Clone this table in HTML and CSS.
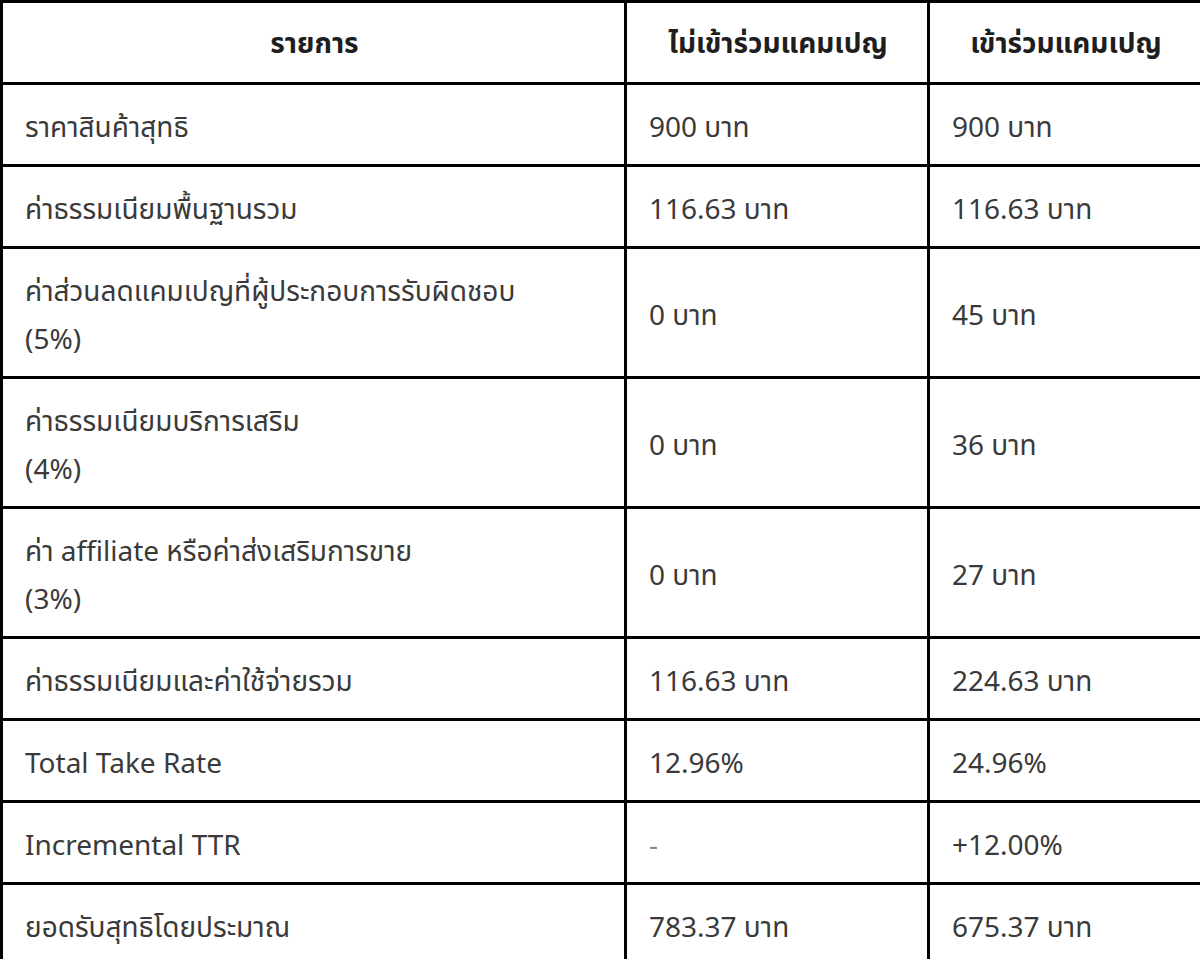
FILE: index.html
```html
<!DOCTYPE html>
<html lang="th">
<head>
<meta charset="utf-8">
<title>เปรียบเทียบค่าธรรมเนียม</title>
<link rel="stylesheet" href="styles.css">
</head>
<body>
<table class="fees">
  <colgroup>
    <col class="c1">
    <col class="c2">
    <col class="c3">
  </colgroup>
  <thead>
    <tr>
      <th>รายการ</th>
      <th>ไม่เข้าร่วมแคมเปญ</th>
      <th>เข้าร่วมแคมเปญ</th>
    </tr>
  </thead>
  <tbody>
    <tr><td>ราคาสินค้าสุทธิ</td><td>900 บาท</td><td>900 บาท</td></tr>
    <tr><td>ค่าธรรมเนียมพื้นฐานรวม</td><td>116.63 บาท</td><td>116.63 บาท</td></tr>
    <tr><td>ค่าส่วนลดแคมเปญที่ผู้ประกอบการรับผิดชอบ<br>(5%)</td><td>0 บาท</td><td>45 บาท</td></tr>
    <tr><td>ค่าธรรมเนียมบริการเสริม<br>(4%)</td><td>0 บาท</td><td>36 บาท</td></tr>
    <tr><td>ค่า affiliate หรือค่าส่งเสริมการขาย<br>(3%)</td><td>0 บาท</td><td>27 บาท</td></tr>
    <tr><td>ค่าธรรมเนียมและค่าใช้จ่ายรวม</td><td>116.63 บาท</td><td>224.63 บาท</td></tr>
    <tr><td>Total Take Rate</td><td>12.96%</td><td>24.96%</td></tr>
    <tr><td>Incremental TTR</td><td class="dash">-</td><td>+12.00%</td></tr>
    <tr><td>ยอดรับสุทธิโดยประมาณ</td><td>783.37 บาท</td><td>675.37 บาท</td></tr>
  </tbody>
</table>
</body>
</html>
```
FILE: styles.css
```css
html, body {
  margin: 0;
  padding: 0;
  background: #ffffff;
}

body {
  font-family: "Noto Sans", "Noto Sans Thai", "Noto Sans Thai UI", "Leelawadee UI", Tahoma, sans-serif;
  font-size: 28px;
  line-height: 48px;
  color: #3a3a3a;
}

.fees {
  width: 1200px;
  table-layout: fixed;
  border-collapse: collapse;
  border: 3px solid #000;
}

.fees .c1 { width: 624px; }
.fees .c2 { width: 303px; }
.fees .c3 { width: 273px; }

.fees th,
.fees td {
  border: 3px solid #000;
  padding: 17px 20px 14px 22px;
  vertical-align: middle;
  text-align: left;
  font-weight: 400;
}

.fees th {
  text-align: center;
  font-weight: 700;
  color: #1e1e1e;
  padding-top: 15px;
  padding-bottom: 16px;
}

.fees .dash {
  color: #888;
}
```
